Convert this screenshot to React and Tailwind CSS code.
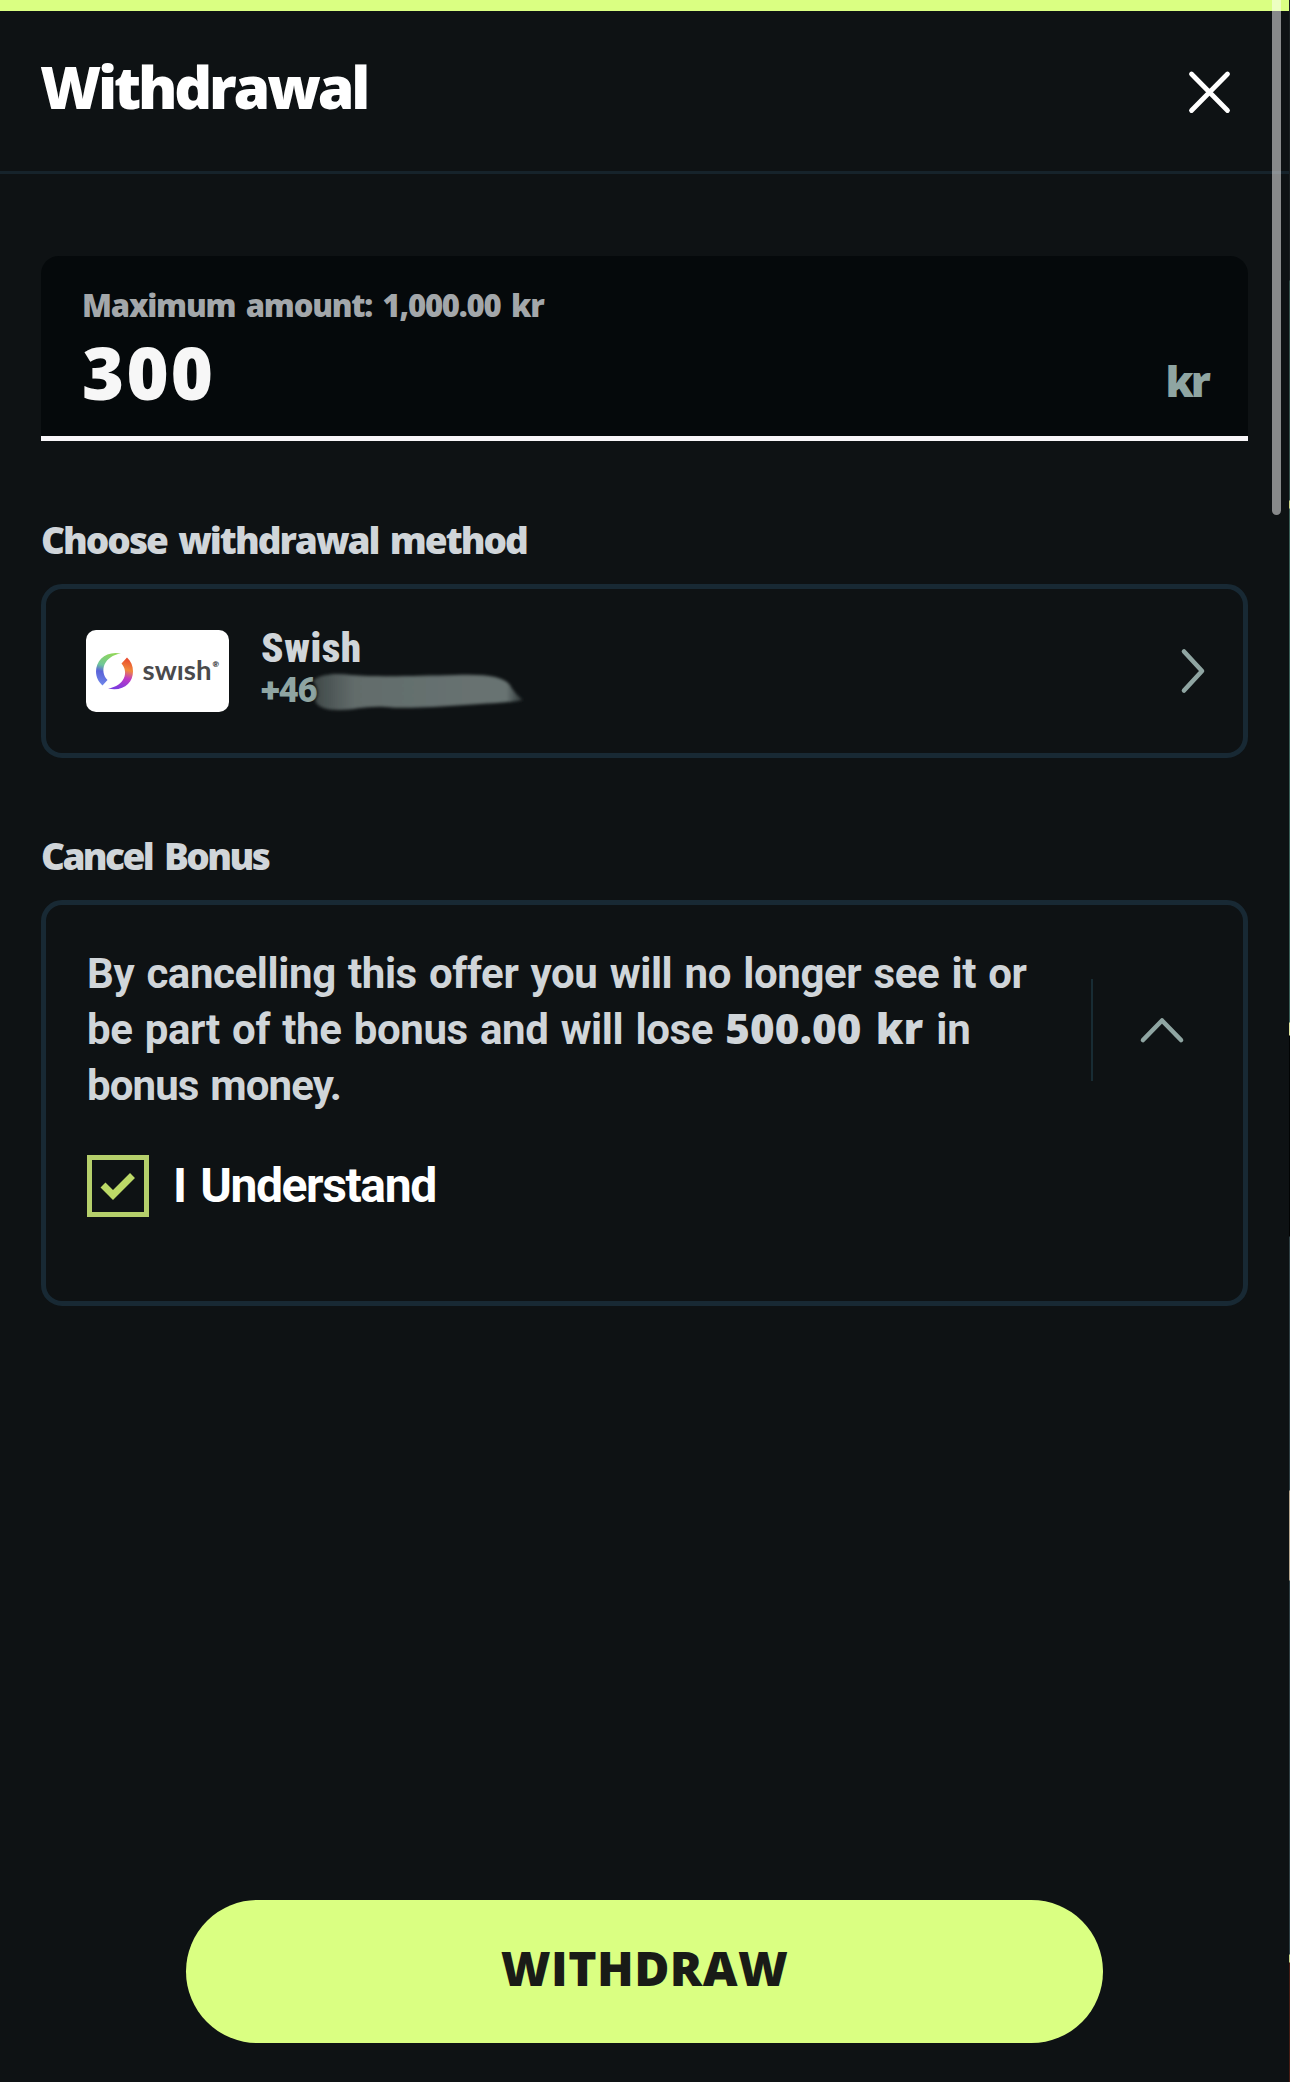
import { useState } from 'react';

const SwishLogo = () => (
  <div className="w-[143px] h-[82px] shrink-0 flex items-center justify-center bg-white rounded-[10px]">
    <svg width="143" height="82" viewBox="0 0 143 82">
      <defs>
        <linearGradient id="swishLeft" x1="0.5" y1="0" x2="0.3" y2="1">
          <stop offset="0" stopColor="#8fd65a" />
          <stop offset="0.4" stopColor="#6fc79a" />
          <stop offset="0.6" stopColor="#5a62d8" />
          <stop offset="1" stopColor="#6f86ea" />
        </linearGradient>
        <linearGradient id="swishRight" x1="0.6" y1="0" x2="0.4" y2="1">
          <stop offset="0" stopColor="#ea4a2c" />
          <stop offset="0.35" stopColor="#f08a3c" />
          <stop offset="0.6" stopColor="#c03ac4" />
          <stop offset="1" stopColor="#7a3be0" />
        </linearGradient>
      </defs>
      <path d="M35 23.500C20 20.500 10 30 10 41.500C10 47 12.500 52 16.500 55.500L21.500 50C13 41 18 26 35 23.500Z" fill="url(#swishLeft)" />
      <path d="M22 58.500C37 62 47 53 47 41.500C47 36 45 31 41 27.500L35.500 33.500C43 42 39 56 22 58.500Z" fill="url(#swishRight)" />
      <text x="56.500" y="49.500" fontFamily="Lato, sans-serif" fontWeight="700" fontSize="27" fill="#4a4a4c" textLength="69" lengthAdjust="spacingAndGlyphs">swısh</text>
      <text x="126.500" y="37" fontFamily="Lato, sans-serif" fontSize="8" fill="#4a4a4c">®</text>
    </svg>
  </div>
);

// Marker stroke that hides the rest of the phone number
const Redaction = () => (
  <svg className="absolute left-[44px] top-0" width="230" height="46" viewBox="0 0 230 46">
    <defs>
      <filter id="soft" x="-10%" y="-20%" width="120%" height="140%">
        <feGaussianBlur stdDeviation="1.8" />
      </filter>
      <linearGradient id="marker" x1="0" x2="1">
        <stop offset="0" stopColor="#3f4848" />
        <stop offset="0.2" stopColor="#626c6b" />
        <stop offset="0.92" stopColor="#687372" />
        <stop offset="1" stopColor="#2a3233" />
      </linearGradient>
    </defs>
    <g filter="url(#soft)">
      <path d="M8 10C15 3 30 2 46 4C70 6 110 5 150 4C180 3 198 5 205 14C208 20 214 26 218 29C205 32 185 32 160 34C130 36 100 38 80 36C60 35 50 39 34 39C20 39 13 36 10 30C14 24 13 16 8 10Z" fill="url(#marker)" />
    </g>
  </svg>
);

const App = () => {
  const [amount, setAmount] = useState('300');
  const [understood, setUnderstood] = useState(true);

  return (
    <div className="relative w-full h-[2082px] flex flex-col overflow-hidden bg-[#0e1214] font-['Open_Sans',sans-serif] font-extrabold text-[#d0d5d9]">
      <div className="h-[10.5px] shrink-0 bg-[#daff82]" />

      {/* Header */}
      <header className="h-[163.5px] shrink-0 flex items-start justify-between pl-[40px] pr-[58px] border-b-[3px] border-[#16232b]">
        <h1 className="mt-[45px] text-[59px] leading-[60px] text-white tracking-[-3.2px]">Withdrawal</h1>
        <button className="mt-[59px]" aria-label="Close">
          <svg width="44" height="44" viewBox="0 0 44 44" fill="none" stroke="#fff" strokeWidth="4.8" strokeLinecap="round">
            <path d="M3.500 4L39.500 40.500M39.500 4L3.500 40.500" />
          </svg>
        </button>
      </header>

      <main className="flex flex-col pl-[41px] pr-[42px]">
        {/* Amount */}
        <div className="mt-[82px] h-[185px] flex justify-between pl-[41px] pr-[40px] rounded-t-[18px] bg-[#05090b] border-b-[5px] border-[#f8f6f9]">
          <label className="flex flex-col pt-[29px]">
            <span className="text-[31px] leading-[40px] text-[#a3a7aa] whitespace-nowrap tracking-[-1.2px] [word-spacing:3.6px]">Maximum amount: 1,000.00 kr</span>
            <input
              className="mt-[11px] w-[400px] h-[72px] p-0 bg-transparent outline-none text-[72px] leading-[72px] tracking-[2.2px] text-[#f7f7f7]"
              value={amount}
              onChange={(e) => setAmount(e.target.value)}
            />
          </label>
          <span className="mt-[100px] text-[43px] leading-[50px] text-[#8fa5a2] tracking-[-3px]">kr</span>
        </div>

        {/* Withdrawal method */}
        <h2 className="mt-[79px] text-[37px] leading-[40px] tracking-[-2px] [word-spacing:3.6px]">Choose withdrawal method</h2>
        <button className="mt-[24px] h-[174px] flex items-center text-left pl-[40px] pr-[36px] border-[5px] border-[#182934] rounded-[21px]">
          <SwishLogo />
          <div className="ml-[32px] grow flex flex-col pb-[6px] font-['Roboto',sans-serif] font-black">
            <span className="text-[41px] leading-[46px] [font-stretch:75%] tracking-[0.6px]">Swish</span>
            <div className="relative">
              <span className="block text-[35px] leading-[40px] text-[#8fa5a2] tracking-[-1.2px]">+46</span>
              <Redaction />
            </div>
          </div>
          <svg width="28" height="48" viewBox="0 0 28 48" fill="none" stroke="#8fa5a2" strokeWidth="4.6" strokeLinecap="round" strokeLinejoin="round">
            <path d="M5 4.500L23 24L5 43.500" />
          </svg>
        </button>

        {/* Cancel bonus */}
        <h2 className="mt-[78px] text-[37px] leading-[40px] tracking-[-2.6px] [word-spacing:5px]">Cancel Bonus</h2>
        <div className="mt-[24px] h-[406px] pt-[41px] pl-[41px] border-[5px] border-[#182934] rounded-[21px]">
          <div className="flex">
            <p className="w-[1004px] font-['Roboto',sans-serif] text-[42px] leading-[56px] font-bold whitespace-nowrap">
              <span className="tracking-[-0.4px] [word-spacing:2.2px]">By cancelling this offer you will no longer see it or</span>
              <br />
              <span className="tracking-[-0.4px] [word-spacing:2.2px]">be part of the bonus and will lose </span>
              <b className="font-['Open_Sans',sans-serif] font-extrabold leading-none tracking-[0.2px] [word-spacing:3px]">500.00 kr</b>
              <span className="[word-spacing:2.2px]"> in</span>
              <br />
              <span className="tracking-[-0.9px] [word-spacing:2.2px]">bonus money.</span>
            </p>
            <div className="mt-[33px] w-[2px] h-[102px] bg-[#182c34]" />
            <svg className="ml-[44px] mt-[68px]" width="52" height="32" viewBox="0 0 52 32" fill="none" stroke="#8fa5a2" strokeWidth="4.6" strokeLinecap="round" strokeLinejoin="round">
              <path d="M6 26L25 6.500L44 26" />
            </svg>
          </div>
          <button className="mt-[41px] flex items-center" onClick={() => setUnderstood(!understood)}>
            <span className="w-[62px] h-[62px] flex items-center justify-center border-[5px] border-[#b5cf6b]">
              {understood && (
                <svg width="52" height="52" viewBox="0 0 52 52" fill="none" stroke="#bcd967" strokeWidth="7">
                  <path d="M11 25L21 35L40.500 15.500" />
                </svg>
              )}
            </span>
            <span className="ml-[24px] font-['Roboto',sans-serif] text-[48px] leading-[62px] font-bold text-white tracking-[-1.4px] [word-spacing:4px]">I Understand</span>
          </button>
        </div>
      </main>

      <button className="mt-auto mb-[39px] ml-[186px] w-[917px] h-[143px] shrink-0 rounded-full bg-[#daff82] text-[48px] leading-[60px] text-[#191b17] tracking-[0.4px] pb-[8px]">
        WITHDRAW
      </button>

      {/* Scrollbar */}
      <div className="absolute top-0 right-[9px] w-[9px] h-[515px] rounded-b-full bg-white/50" />

      {/* Sliver of the page behind the drawer */}
      <div className="absolute top-0 right-0 w-px h-full bg-[linear-gradient(#1a2022_280px,#33504a_281px,#33504a_500px,#c8d68a_501px,#c8d68a_508px,#3a6058_509px,#3a6058_1022px,#dfe6a0_1023px,#dfe6a0_1035px,#020404_1036px,#020404_1236px,#2f4044_1237px,#2f4044_1490px,#b8a890_1491px,#b8a890_1580px,#2f4044_1581px,#2f4044_1954px,#c8d68a_1955px,#c8d68a_1962px,#4a1c14_1963px)]" />
    </div>
  );
};

export default App;
